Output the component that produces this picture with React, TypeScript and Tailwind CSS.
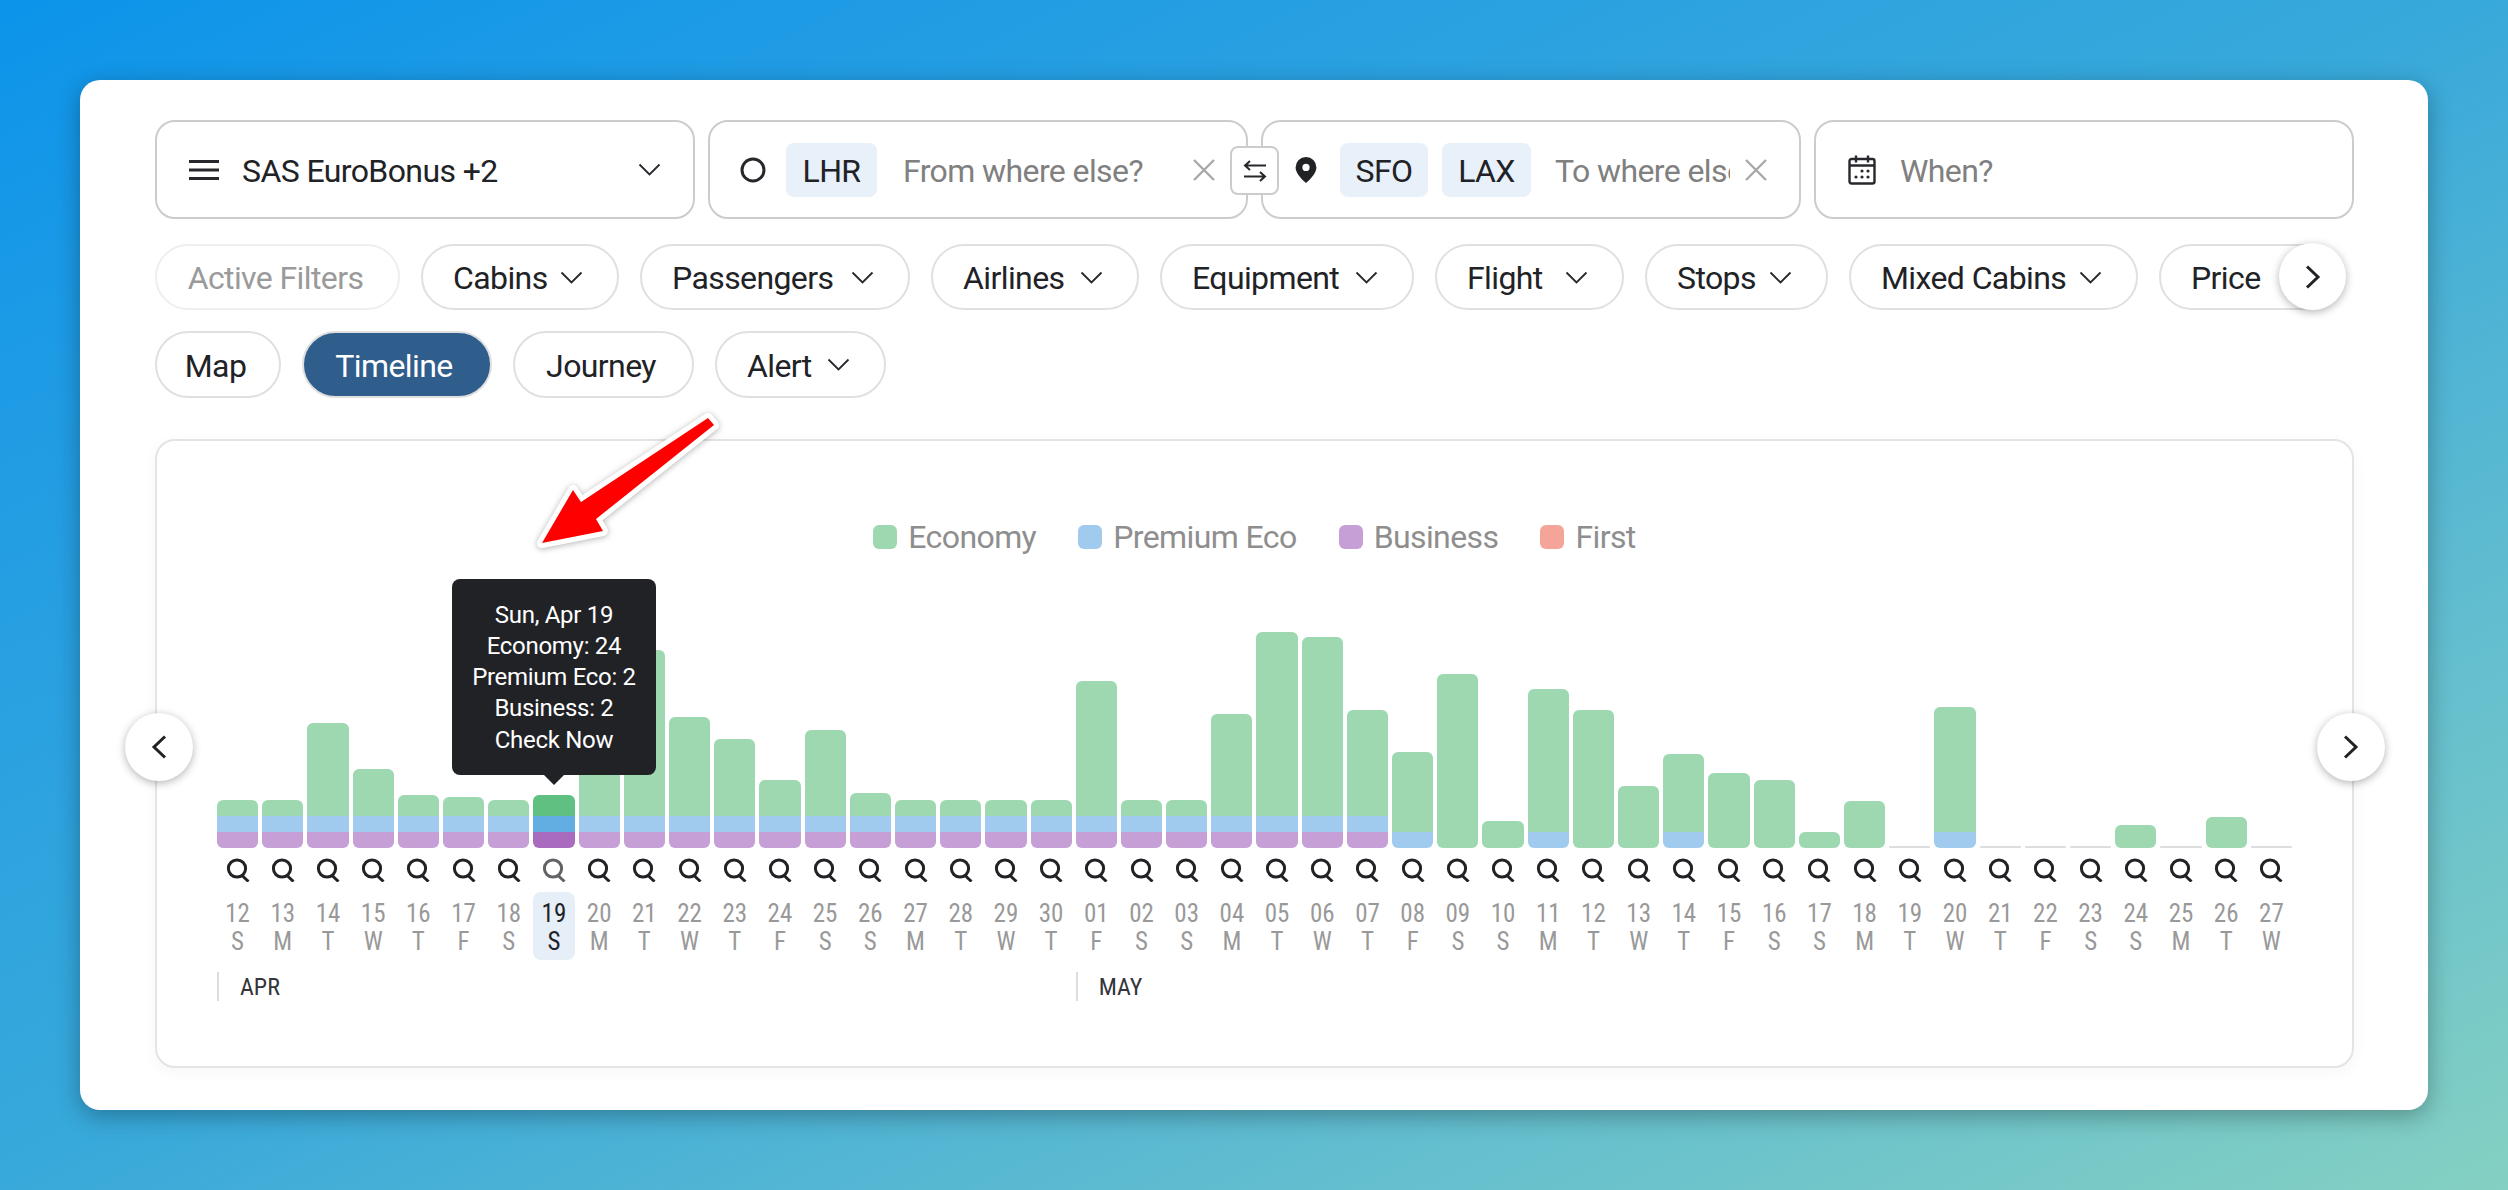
import React from 'react';

const LETTERS = 'SMTWTFS';
const BASE_Y = 848;

// top edge of each bar in the picture and how many cabins are stacked in it
const APR: [number, number][] = [
  [800, 3], [800, 3], [723, 3], [769, 3], [795, 3], [797, 3], [800, 3], [795, 3], [700, 3], [650, 3],
  [717, 3], [739, 3], [780, 3], [730, 3], [793, 3], [800, 3], [800, 3], [800, 3], [800, 3],
];
const MAY: [number, number][] = [
  [681, 3], [800, 3], [800, 3], [714, 3], [632, 3], [637, 3], [710, 3], [752, 2], [674, 1], [821, 1],
  [689, 2], [710, 1], [786, 1], [754, 2], [773, 1], [780, 1], [832, 1], [801, 1], [BASE_Y, 0], [707, 2],
  [BASE_Y, 0], [BASE_Y, 0], [BASE_Y, 0], [825, 1], [BASE_Y, 0], [817, 1], [BASE_Y, 0],
];

const days = [
  ...APR.map(([top, tier], i) => ({ day: String(12 + i), top, tier })),
  ...MAY.map(([top, tier], i) => ({ day: String(i + 1).padStart(2, '0'), top, tier })),
].map((d, i) => ({ ...d, letter: LETTERS[i % 7], active: i === 7 }));

const filters = [
  { label: 'Active Filters', cls: 'w-[245px] justify-center border-[#eeeeee] text-[#9a9a9a]', chevron: false },
  { label: 'Cabins', cls: 'w-[198px] justify-between', chevron: true },
  { label: 'Passengers', cls: 'w-[270px] justify-between', chevron: true },
  { label: 'Airlines', cls: 'w-[208px] justify-between', chevron: true },
  { label: 'Equipment', cls: 'w-[254px] justify-between', chevron: true },
  { label: 'Flight', cls: 'w-[189px] justify-between', chevron: true },
  { label: 'Stops', cls: 'w-[183px] justify-between', chevron: true },
  { label: 'Mixed Cabins', cls: 'w-[289px] justify-between', chevron: true },
  { label: 'Price', cls: 'w-[180px] justify-between', chevron: false },
];

const legend = [
  { label: 'Economy', cls: 'bg-[#9ed8b0]' },
  { label: 'Premium Eco', cls: 'bg-[#a0cbee]' },
  { label: 'Business', cls: 'bg-[#c59fd6]' },
  { label: 'First', cls: 'bg-[#f5a49a]' },
];

const Chevron = ({ className = 'w-[23px] h-[13px]' }: { className?: string }) => (
  <svg viewBox="0 0 23 13" className={className} fill="none" stroke="#26282c" strokeWidth="1.800">
    <path d="M1.500 1.500 11.500 11.500 21.500 1.500" />
  </svg>
);

const Side = ({ dir }: { dir: 'left' | 'right' }) => (
  <svg viewBox="0 0 16 24" className="w-[16px] h-[24px]" fill="none" stroke="#212226" strokeWidth="3">
    <path d={dir === 'left' ? 'M14 1.500 3 12l11 10.500' : 'M2 1.500 13 12 2 22.500'} />
  </svg>
);

const Cross = () => (
  <svg viewBox="0 0 24 24" className="w-[24px] h-[24px] shrink-0" fill="none" stroke="#a8a8a8" strokeWidth="2.400">
    <path d="M2 2l20 20M22 2 2 22" />
  </svg>
);

const SearchGlyph = ({ dim }: { dim: boolean }) => (
  <svg viewBox="0 0 24 24" className={dim ? 'w-[24px] h-[24px] opacity-70' : 'w-[24px] h-[24px]'} fill="none" stroke="#212226" strokeWidth="3">
    <circle cx="11" cy="10.500" r="8.600" />
    <path d="M15.500 17 22.500 23.500" />
  </svg>
);

const Tag = ({ className, children }: { className: string; children: React.ReactNode }) => (
  <span className={`shrink-0 h-[54px] pt-[2px] flex items-center justify-center rounded-[8px] bg-[#e8f0f9] ${className}`}>{children}</span>
);

const Pill = ({ className = '', children }: { className?: string; children: React.ReactNode }) => (
  <div className={`shrink-0 rounded-full border-2 border-[#e0e0e0] flex items-center ${className}`}>
    {children}
  </div>
);

const Tooltip = () => (
  <div className="absolute z-10 bottom-[calc(100%+20px)] left-1/2 -translate-x-1/2 w-[204px] pt-[21px] pb-[19px] rounded-[8px] bg-[#212226] text-white text-center text-[24px] tracking-[-0.3px] leading-[31.300px]">
    <div>Sun, Apr 19</div>
    <div>Economy: 24</div>
    <div>Premium Eco: 2</div>
    <div>Business: 2</div>
    <div>Check Now</div>
    <div className="absolute top-full left-1/2 -translate-x-1/2 border-x-[10px] border-t-[10px] border-x-transparent border-t-[#212226]" />
  </div>
);

const DayBar = ({ top, tier, active }: { top: number; tier: number; active: boolean }) => {
  if (tier === 0) return <div className="w-full h-[2px] rounded-full bg-[#dddddd]" />;
  return (
    <div className="relative w-full" style={{ height: BASE_Y - top }}>
      {active && <Tooltip />}
      <div className="h-full flex flex-col rounded-[6px] overflow-hidden">
        <div className={active ? 'flex-1 bg-[#5fc081]' : 'flex-1 bg-[#9ed8b0]'} />
        {tier >= 2 && <div className={active ? 'h-[16px] bg-[#62ade2]' : 'h-[16px] bg-[#a0cbee]'} />}
        {tier >= 3 && <div className={active ? 'h-[16px] bg-[#a86bbd]' : 'h-[16px] bg-[#c59fd6]'} />}
      </div>
    </div>
  );
};

export default function App() {
  return (
    <div className="relative w-[2508px] h-[1190px] p-[80px] bg-linear-to-br from-[#0a94ea] via-[#38a9da] to-[#84d0c2] font-['Roboto',sans-serif] text-[32px] tracking-[-0.6px] whitespace-nowrap text-[#212226] overflow-hidden">
      <div className="h-full rounded-[20px] bg-white shadow-[0_6px_24px_rgba(0,0,0,0.3)] pt-[40px] pl-[75px] pr-[74px]">
        {/* search fields */}
        <div className="relative grid grid-cols-4 gap-[13px] h-[99px]">
          <div className="flex items-center rounded-[20px] border-2 border-[#cccccc] pl-[32px] pr-[32px]">
            <svg viewBox="0 0 30 22" className="w-[30px] h-[22px] shrink-0" fill="none" stroke="#26282c" strokeWidth="3">
              <path d="M0 2.500h30M0 11h30M0 19.500h30" />
            </svg>
            <span className="ml-[23px] flex-1 pt-[3px]">SAS EuroBonus +2</span>
            <Chevron />
          </div>
          <div className="flex items-center rounded-[20px] border-2 border-[#cccccc] pl-[30px] pr-[30px]">
            <svg viewBox="0 0 26 26" className="w-[26px] h-[26px] shrink-0" fill="none" stroke="#26282c" strokeWidth="3">
              <circle cx="13" cy="13" r="11" />
            </svg>
            <span className="ml-[20px]"><Tag className="w-[91px]">LHR</Tag></span>
            <span className="ml-[26px] flex-1 pt-[3px] text-[#808080]">From where else?</span>
            <Cross />
          </div>
          <div className="flex items-center rounded-[20px] border-2 border-[#cccccc] pl-[32px] pr-[30px]">
            <svg viewBox="0 0 20 25" className="w-[22px] h-[26px] shrink-0">
              <path fill="#212226" fillRule="evenodd" d="M10 0a10 10 0 0 0-10 10c0 5.500 6 11.500 10 15 4-3.500 10-9.500 10-15A10 10 0 0 0 10 0Zm0 6.500a3.500 3.500 0 1 1 0 7 3.500 3.500 0 0 1 0-7Z" />
            </svg>
            <span className="ml-[23px]"><Tag className="w-[88px]">SFO</Tag></span>
            <span className="ml-[14px]"><Tag className="w-[89px]">LAX</Tag></span>
            <span className="ml-[24px] w-[175px] pt-[3px] overflow-hidden text-[#808080]">To where else?</span>
            <span className="ml-[14px]"><Cross /></span>
          </div>
          <div className="flex items-center rounded-[20px] border-2 border-[#cccccc] pl-[32px]">
            <svg viewBox="0 0 28 30" className="w-[28px] h-[30px] shrink-0" fill="none" stroke="#26282c" strokeWidth="2.400">
              <rect x="1.500" y="4" width="25" height="24.500" rx="2" />
              <path d="M1.500 10.500h25M8 0.500v7M20 0.500v7" />
              <g fill="#26282c" stroke="none">
                <circle cx="14" cy="16" r="1.600" /><circle cx="20" cy="16" r="1.600" />
                <circle cx="8" cy="22" r="1.600" /><circle cx="14" cy="22" r="1.600" /><circle cx="20" cy="22" r="1.600" />
              </g>
            </svg>
            <span className="ml-[24px] pt-[3px] text-[#808080]">When?</span>
          </div>
          <div className="absolute left-[1075px] top-[26px] w-[49px] h-[49px] rounded-[8px] border-2 border-[#cccccc] bg-white flex items-center justify-center">
            <svg viewBox="0 0 24 22" className="w-[24px] h-[22px]" fill="none" stroke="#26282c" strokeWidth="2">
              <path d="M23 5.500H2M7 1 2 5.500 7 10M1 16.500h21M17 12l5 4.500-5 4.500" />
            </svg>
          </div>
        </div>

        {/* filter chips */}
        <div className="relative mt-[25px]">
          <div className="flex gap-[21px] overflow-hidden">
            {filters.map((f) => (
              <Pill key={f.label} className={`h-[66px] pl-[30px] pr-[34px] ${f.cls}`}>
                <span className="pt-[2px]">{f.label}</span>
                {f.chevron && <Chevron />}
              </Pill>
            ))}
          </div>
          <button className="absolute left-[2124px] -top-px w-[67px] h-[67px] rounded-full bg-white shadow-[0_2px_8px_rgba(0,0,0,0.3)] flex items-center justify-center">
            <Side dir="right" />
          </button>
        </div>

        {/* view switch */}
        <div className="flex gap-[21px] mt-[21px]">
          <Pill className="h-[67px] w-[126px] pr-[5px] justify-center"><span className="pt-[2px]">Map</span></Pill>
          <Pill className="h-[67px] w-[190px] pr-[6px] justify-center border-[#2f5d8c] bg-[#2f5d8c] text-white"><span className="pt-[2px]">Timeline</span></Pill>
          <Pill className="h-[67px] w-[181px] pr-[5px] justify-center"><span className="pt-[2px]">Journey</span></Pill>
          <Pill className="h-[67px] w-[171px] pl-[30px] pr-[34px] justify-between"><span className="pt-[2px]">Alert</span><Chevron /></Pill>
        </div>

        {/* timeline chart */}
        <div className="relative mt-[41px] h-[629px] rounded-[20px] border-2 border-[#e4e4e4] shadow-[0_4px_16px_rgba(0,0,0,0.04)] pt-[82px] pl-[60px] pr-[60px]">
          <div className="flex justify-center gap-[42px] h-[27px] text-[#8e8e8e]">
            {legend.map((l) => (
              <div key={l.label} className="flex items-center gap-[11px]">
                <span className={`w-[24px] h-[24px] rounded-[6px] ${l.cls}`} />
                <span>{l.label}</span>
              </div>
            ))}
          </div>

          <div className="grid grid-cols-[repeat(46,minmax(0,1fr))] gap-x-[4px]">
            {days.map((d, i) => (
              <div key={i} className="flex flex-col items-center">
                <div className="w-full h-[298px] flex items-end">
                  <DayBar top={d.top} tier={d.tier} active={d.active} />
                </div>
                <div className="mt-[10px] h-[24px]"><SearchGlyph dim={d.active} /></div>
                <div className={`mt-[10px] w-full h-[68px] pt-[3px] rounded-[8px] flex flex-col items-center justify-center text-[25px] tracking-normal leading-[28px] [font-stretch:75%] ${d.active ? 'bg-[#e6eef8] text-[#212226]' : 'text-[#999999]'}`}>
                  <span>{d.day}</span>
                  <span>{d.letter}</span>
                </div>
              </div>
            ))}
          </div>

          <div className="grid grid-cols-[repeat(46,minmax(0,1fr))] gap-x-[4px] mt-[12px] text-[24px] tracking-normal text-[#33353a] [font-stretch:85%]">
            <div className="col-span-19 h-[29px] border-l-2 border-[#dddddd] pl-[21px] flex items-center">APR</div>
            <div className="col-span-27 h-[29px] border-l-2 border-[#dddddd] pl-[21px] flex items-center">MAY</div>
          </div>

          <button className="absolute -left-[32px] top-[272px] w-[68px] h-[68px] rounded-full bg-white shadow-[0_2px_8px_rgba(0,0,0,0.3)] flex items-center justify-center">
            <Side dir="left" />
          </button>
          <button className="absolute -right-[33px] top-[272px] w-[68px] h-[68px] rounded-full bg-white shadow-[0_2px_8px_rgba(0,0,0,0.3)] flex items-center justify-center">
            <Side dir="right" />
          </button>
        </div>
      </div>

      {/* red annotation arrow */}
      <svg viewBox="0 0 195 150" className="absolute left-[530px] top-[405px] w-[195px] h-[150px] drop-shadow-[0_1px_3px_rgba(0,0,0,0.3)]">
        <path
          d="M12 138 43 85 51 97 178 13 184 20 66 114 73 126Z"
          fill="#ff0000"
          stroke="#ffffff"
          strokeWidth="10"
          strokeLinejoin="round"
          paintOrder="stroke"
        />
      </svg>
    </div>
  );
}
